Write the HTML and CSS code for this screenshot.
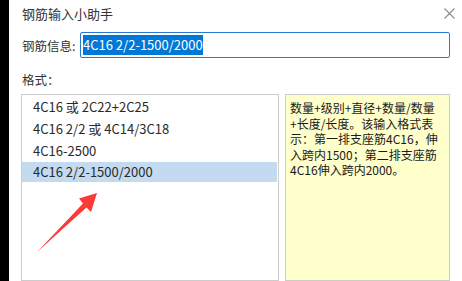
FILE: index.html
```html
<!DOCTYPE html>
<html lang="zh-CN">
<head>
<meta charset="utf-8">
<title>钢筋输入小助手</title>
<link rel="stylesheet" href="styles.css">
</head>
<body>
<div class="screen">
  <div class="edge"></div>
  <div class="dialog">
    <div class="titlebar">
      <span class="title">钢筋输入小助手</span>
      <svg class="close" width="11" height="11" viewBox="0 0 11 11"><path d="M0.5 0.5 L10.5 10.5 M10.5 0.5 L0.5 10.5" stroke="#8c8c8c" stroke-width="1.1" fill="none"/></svg>
    </div>
    <div class="field-row">
      <label class="field-label">钢筋信息:</label>
      <div class="input"><span class="selection">4C16 2/2-1500/2000</span></div>
    </div>
    <div class="section-label">格式：</div>
    <div class="panes">
      <ul class="list">
        <li class="item">4C16 或 2C22+2C25</li>
        <li class="item">4C16 2/2 或 4C14/3C18</li>
        <li class="item">4C16-2500</li>
        <li class="item selected">4C16 2/2-1500/2000</li>
      </ul>
      <div class="hint">
        <div class="hint-line">数量+级别+直径+数量/数量</div>
        <div class="hint-line">+长度/长度。该输入格式表</div>
        <div class="hint-line">示：第一排支座筋4C16，伸</div>
        <div class="hint-line">入跨内1500；第二排支座筋</div>
        <div class="hint-line">4C16伸入跨内2000。</div>
      </div>
    </div>
  </div>
  <svg class="arrow" width="462" height="281" viewBox="0 0 462 281">
    <polygon points="37,252 86.5,207.5 91,212 97,193 79,198.5 83,203.5" fill="#fb3a3a"/>
  </svg>
</div>
</body>
</html>
```

FILE: styles.css
```css
html, body {
  margin: 0;
  padding: 0;
  background: #ffffff;
}

.screen {
  position: relative;
  width: 462px;
  height: 281px;
  overflow: hidden;
  display: flex;
  font-family: "Noto Sans CJK SC", "Noto Sans", sans-serif;
  color: #1e1e1e;
  font-size: 12.5px;
}

.edge {
  width: 9px;
  flex: none;
  background: #000000;
}

.dialog {
  flex: 1;
  display: flex;
  flex-direction: column;
  padding: 0 12px 0 12px;
  background: #ffffff;
}

.titlebar {
  height: 28px;
  display: flex;
  align-items: center;
  justify-content: space-between;
  padding-left: 1px;
}

.title {
  font-size: 13px;
  color: #333333;
}

.close {
  margin-right: -5px;
}

.field-row {
  margin-top: 6px;
  display: flex;
  align-items: center;
  height: 26px;
}

.field-label {
  width: 59px;
  flex: none;
  padding-left: 1px;
  box-sizing: border-box;
  color: #333333;
}

.input {
  flex: 1;
  height: 26px;
  box-sizing: border-box;
  border: 1px solid #2a78d4;
  border-radius: 2px;
  padding: 2px 2px;
  display: flex;
  align-items: center;
}

.selection {
  background: #0078d7;
  color: #ffffff;
  font-size: 13px;
  line-height: 20px;
  height: 20px;
  display: inline-block;
}

.section-label {
  margin-top: 12px;
  line-height: 20px;
  height: 20px;
  padding-left: 1px;
  color: #333333;
}

.panes {
  margin-top: 4px;
  display: flex;
  gap: 6px;
  height: 200px;
}

.list {
  list-style: none;
  margin: 0;
  padding: 1px 0 0 0;
  width: 258px;
  box-sizing: border-box;
  border: 1px solid #cccccc;
  flex: none;
  font-size: 13px;
}

.item {
  height: 22px;
  line-height: 22px;
  padding-left: 11px;
  color: #2a2a2a;
}

.item.selected {
  background: #c4daf1;
  margin-right: 1px;
  height: 20px;
  line-height: 20px;
}

.hint {
  flex: 1;
  box-sizing: border-box;
  border: 1px solid #cccccc;
  background: #ffffcc;
  padding: 5px 4px 0 4px;
  font-size: 12px;
  color: #1a1a1a;
  white-space: nowrap;
  overflow: hidden;
}

.hint-line {
  height: 15.5px;
  line-height: 15.5px;
}

.arrow {
  position: absolute;
  left: 0;
  top: 0;
  pointer-events: none;
}
```
